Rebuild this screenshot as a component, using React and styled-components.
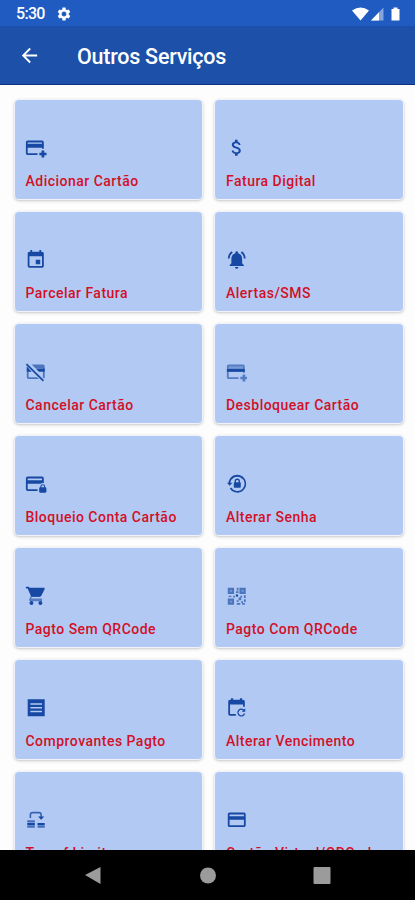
import styled, { createGlobalStyle } from "styled-components";
import {
    MdArrowBack,
    MdAttachMoney,
    MdCreditCard,
    MdEvent,
    MdNotificationsActive,
    MdSettings,
} from "react-icons/md";

const GlobalStyle = createGlobalStyle`
    * {
        box-sizing: border-box;
    }
    body {
        margin: 0;
        background-color: #fdfdfd;
        font-family: Roboto, "Liberation Sans", sans-serif;
    }
`;

const Screen = styled.div`
    display: flex;
    flex-direction: column;
    width: 415px;
    height: 900px;
    overflow: hidden;
`;

const StatusBar = styled.div`
    display: flex;
    align-items: center;
    flex: none;
    height: 26px;
    padding: 1px 13px 0 16px;
    color: #fff;
    background-color: #205bc2;
`;
const Clock = styled.span`
    width: 40px;
    font-size: 16px;
    font-weight: 500;
    letter-spacing: -0.7px;
`;
const StatusIcons = styled.svg`
    width: 52px;
    height: 16px;
    margin-left: auto;
`;

const AppBar = styled.header`
    display: flex;
    align-items: center;
    flex: none;
    height: 59px;
    padding: 0 18px;
    color: #fff;
    background-color: #1d50a8;
    border-bottom: 1px solid #0d2f86;
`;
const Title = styled.h1`
    margin: 2px 0 0 36px;
    font-size: 21.5px;
    font-weight: 500;
    letter-spacing: -0.25px;
`;

const Content = styled.main`
    flex: 1;
    min-height: 0;
    padding: 14.5px 12.5px 0 14.5px;
    overflow: hidden;
`;
const Grid = styled.div`
    display: grid;
    grid-template-columns: 1fr 1fr;
    grid-auto-rows: 99px;
    gap: 13px;
`;
const Card = styled.div`
    display: flex;
    flex-direction: column;
    justify-content: flex-end;
    padding: 0 12px 8.5px 10.5px;
    color: #1749a4;
    background-color: #b2caf3;
    border-radius: 4px;
    box-shadow: 0 0 0 1px #f0f3fa, 0 1px 3px 1px rgba(0, 0, 0, 0.22);

    svg {
        flex: none;
        width: 21.5px;
        height: 21.5px;
    }
`;
const CardLabel = styled.div`
    margin: 13.5px 0 0 0.5px;
    font-size: 14px;
    font-weight: 500;
    line-height: 18px;
    letter-spacing: 0.48px;
    white-space: nowrap;
    color: #d31027;
`;

const NavBar = styled.nav`
    display: flex;
    align-items: center;
    justify-content: space-between;
    flex: none;
    height: 50px;
    padding: 0 84px;
    background-color: #000;
`;
const NavIcon = styled.svg`
    width: 18px;
    height: 18px;
    fill: #9b9b9b;
`;

const Icon = ({ children }) => (
    <svg viewBox="0 0 24 24" fill="currentColor">
        {children}
    </svg>
);

const CardPlusIcon = () => (
    <Icon>
        <path d="M21 17.500h3v3h-2.500V23h-3v-2.500H16v-3h2.500V15h3v2.500zM19 7.500V6H3v1.500h16m0 4.500H3v6h11v2H3c-1.100 0-2-.9-2-2V6c0-1.100.9-2 2-2h16a2 2 0 0 1 2 2v7h-2v-1z" />
    </Icon>
);

const CardPlusSoftIcon = () => (
    <Icon>
        <g opacity="0.6">
            <path d="M3 12v6h11v2H3c-1.100 0-2-.9-2-2V6c0-1.100.9-2 2-2h16a2 2 0 0 1 2 2v7h-2v-1z" />
            <path d="M18.500 15h3v2.500H24v3h-2.500V23h-3v-2.500H16v-3h2.500z" />
        </g>
        <path fill="#b2caf3" opacity="0.4" d="M3 6h16v2.500H3z" />
        <path d="M1 9h20v3H1z" />
    </Icon>
);

const CardOffIcon = () => (
    <Icon>
        <g opacity="0.65">
            <path d="M7.500 4H20a2 2 0 0 1 2 2v12c0 .7-.3 1.300-.8 1.600L20 18.400V8h-8.500z" />
            <path d="M2 6l2 2v10h9.500l2 2H4a2 2 0 0 1-2-2z" />
        </g>
        <path d="M12 8.500h10V12h-6.500zM2 6.500 7.500 12H2z" />
        <path d="M.9 4.300 2.300 2.900l19 18.600-1.400 1.400z" />
    </Icon>
);

const CardLockIcon = () => (
    <Icon>
        <path d="M3 4h16a2 2 0 0 1 2 2v5.200a5 5 0 0 0-4 .8H3v6h11v2H3a2 2 0 0 1-2-2V6a2 2 0 0 1 2-2zm0 2v2h16V6z" />
        <path d="M22.500 16v-.8a2.700 2.700 0 0 0-5.400 0v.8c-.7 0-1.300.6-1.300 1.300v3.400c0 .7.6 1.300 1.300 1.300h5.500c.7 0 1.300-.6 1.300-1.300v-3.400c0-.7-.6-1.300-1.400-1.300zm-1.300 0h-2.800v-1c0-.8.6-1.300 1.400-1.300s1.400.5 1.400 1.300z" />
    </Icon>
);

const LockResetIcon = () => (
    <Icon>
        <path d="M12.600 2C18.100 2 22.500 6.500 22.500 12s-4.400 10-9.900 10c-3.500 0-6.600-1.800-8.300-4.600l1.500-1.200a8 8 0 1 0-1-5.200h2.400l-3.100 3.100L1.100 11h1.700c.5-5.100 4.700-9 9.800-9z" />
        <path d="M15.600 10.200c.5 0 .9.4.9.9v4.600c0 .5-.4.900-.9.9h-6c-.5 0-.9-.4-.9-.9v-4.600c0-.5.4-.9.900-.9v-1a3 3 0 0 1 6 0zm-3-2.500c-.8 0-1.500.7-1.500 1.500v1h3v-1c0-.8-.7-1.500-1.500-1.500z" />
    </Icon>
);

const CartIcon = () => (
    <Icon>
        <path d="M1 2v2h2l1 2.500L7 13h9.500c.8 0 1.400-.4 1.700-1L22 4.500C22.300 3.800 21.800 3 21 3H5.200l-.9-1z" />
        <path opacity="0.6" d="M6.500 12h10v1.500h-9L7 15h12v3H6a1.500 1.500 0 0 1-1.300-2.200z" />
        <circle cx="7.200" cy="20" r="2.200" />
        <circle cx="17.200" cy="20" r="2.200" />
    </Icon>
);

const QrIcon = () => (
    <Icon>
        <g opacity="0.65">
            <path d="M2 3h7v7H2zM15 3h7v7h-7zM2 15h7v7H2z" />
            <path d="M12 3h2v3h-2zM11 7h3v2h-3zM3 12h3v1.500H3zM8 12h2v2H8zM16 12h2v2h-2zM20 11.500h2v3h-2zM14 14h3v3h-3zM12 17h2v2h-2zM12 20h4v2h-4zM17 18h2v2h-2zM20 16h2v3h-2zM18 20h3v2h-3z" />
        </g>
        <path d="M11 10.500h2.500V13H11z" />
        <path fill="#b2caf3" opacity="0.5" d="M4.500 5.500h2v2h-2zM17.500 5.500h2v2h-2zM4.500 17.500h2v2h-2z" />
    </Icon>
);

const ReceiptIcon = () => (
    <Icon>
        <path fillRule="evenodd" d="M3 2.500h19v19H3zM6 7v1.700h13V7zm0 4.200v1.700h13v-1.700zm0 4.200v1.700h13v-1.700z" />
    </Icon>
);

const CalendarRefreshIcon = () => (
    <Icon>
        <path d="M5.500 1.500H8V3h7.500V1.500H18V3h1a2 2 0 0 1 2 2v6h-2V8.500H4.500V19H11v2H4.500a2 2 0 0 1-2-2V5c0-1.100.9-2 2-2h1z" />
        <path d="M21.500 12.500v4h-4l1.500-1.500a3 3 0 1 0 .9 3.500h1.600a4.500 4.500 0 1 1-1.400-4.600z" />
    </Icon>
);

const TransferIcon = () => (
    <Icon>
        <path opacity="0.7" d="M2.500 12.500H11V15H2.500zM2.500 18.500H11V21H2.500zM14 18.500h8V21h-8z" />
        <path d="M2.500 15.500H11V18H2.500zM14 15.500h8V18h-8z" />
        <path
            d="M6 10V6.500A2.500 2.500 0 0 1 8.500 4h7A2.500 2.500 0 0 1 18 6.500V9"
            fill="none"
            stroke="currentColor"
            strokeWidth="1.800"
            opacity="0.8"
        />
        <path d="M14.500 8.500h7L18 12z" />
    </Icon>
);

const SERVICES = [
    { label: "Adicionar Cartão", icon: CardPlusIcon },
    { label: "Fatura Digital", icon: MdAttachMoney },
    { label: "Parcelar Fatura", icon: MdEvent },
    { label: "Alertas/SMS", icon: MdNotificationsActive },
    { label: "Cancelar Cartão", icon: CardOffIcon },
    { label: "Desbloquear Cartão", icon: CardPlusSoftIcon },
    { label: "Bloqueio Conta Cartão", icon: CardLockIcon },
    { label: "Alterar Senha", icon: LockResetIcon },
    { label: "Pagto Sem QRCode", icon: CartIcon },
    { label: "Pagto Com QRCode", icon: QrIcon },
    { label: "Comprovantes Pagto", icon: ReceiptIcon },
    { label: "Alterar Vencimento", icon: CalendarRefreshIcon },
    { label: "Transf Limite", icon: TransferIcon },
    { label: "Cartão Virtual/QRCode", icon: MdCreditCard },
];

const App = () => {
    return (
        <Screen>
            <GlobalStyle />
            <StatusBar>
                <Clock>5:30</Clock>
                <MdSettings size={16} />
                <StatusIcons viewBox="0 0 52 16" fill="#fff">
                    <path d="M2 4.500Q10.500-1.500 19 4.500L10.500 14.500z" />
                    <path d="M33.500 1.500v13H21z" opacity="0.45" />
                    <path d="M29 6.200v8.300h-8z" />
                    <path d="M41.500 3h2V1.500h4V3h2v11.500h-8z" />
                </StatusIcons>
            </StatusBar>
            <AppBar>
                <MdArrowBack size={23} />
                <Title>Outros Serviços</Title>
            </AppBar>
            <Content>
                <Grid>
                    {SERVICES.map(({ label, icon: ServiceIcon }) => (
                        <Card key={label}>
                            <ServiceIcon />
                            <CardLabel>{label}</CardLabel>
                        </Card>
                    ))}
                </Grid>
            </Content>
            <NavBar>
                <NavIcon viewBox="0 0 18 18">
                    <path d="M1 9 16.500 1v17z" />
                </NavIcon>
                <NavIcon viewBox="0 0 18 18">
                    <circle cx="9" cy="9.500" r="8" />
                </NavIcon>
                <NavIcon viewBox="0 0 18 18">
                    <rect x="0.500" y="1" width="17" height="17" rx="1" />
                </NavIcon>
            </NavBar>
        </Screen>
    );
};

export default App;
